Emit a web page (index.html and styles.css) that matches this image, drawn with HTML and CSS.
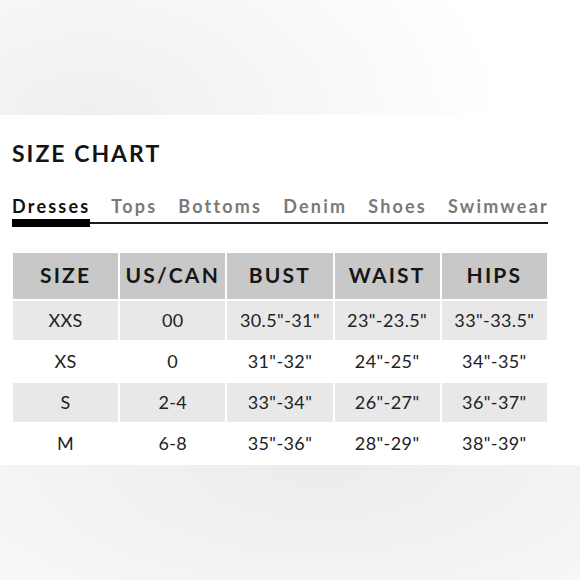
FILE: index.html
```html
<!DOCTYPE html>
<html>
<head>
<meta charset="utf-8">
<link rel="stylesheet" href="styles.css">
</head>
<body>
<div class="band band-top"></div>
<section class="sheet">
  <h1 class="title">SIZE CHART</h1>
  <nav class="tabs">
    <span class="tab active">Dresses</span>
    <span class="tab">Tops</span>
    <span class="tab">Bottoms</span>
    <span class="tab">Denim</span>
    <span class="tab">Shoes</span>
    <span class="tab">Swimwear</span>
  </nav>
  <table class="chart">
    <thead>
      <tr><th>SIZE</th><th>US/CAN</th><th>BUST</th><th>WAIST</th><th>HIPS</th></tr>
    </thead>
    <tbody>
      <tr class="shade"><td>XXS</td><td>00</td><td>30.5"-31"</td><td>23"-23.5"</td><td>33"-33.5"</td></tr>
      <tr><td>XS</td><td>0</td><td>31"-32"</td><td>24"-25"</td><td>34"-35"</td></tr>
      <tr class="shade"><td>S</td><td>2-4</td><td>33"-34"</td><td>26"-27"</td><td>36"-37"</td></tr>
      <tr><td>M</td><td>6-8</td><td>35"-36"</td><td>28"-29"</td><td>38"-39"</td></tr>
    </tbody>
  </table>
</section>
<div class="band band-bottom"></div>
</body>
</html>
```
FILE: styles.css
```css
html, body {
  margin: 0;
  padding: 0;
  background: #ffffff;
}
body {
  width: 580px;
  height: 580px;
  overflow: hidden;
  font-family: Lato, "Liberation Sans", sans-serif;
  color: #1a1a1a;
}
.band {
  height: 115px;
}
.band-top {
  background:
    radial-gradient(ellipse 420px 260px at 15% 100%, #efefef 0%, #f6f6f6 45%, rgba(255,255,255,0) 100%),
    #ffffff;
}
.band-bottom {
  background:
    radial-gradient(ellipse 520px 220px at 55% 0%, #ececec 0%, #f3f3f3 50%, #fbfbfb 100%),
    #fbfbfb;
}
.sheet {
  height: 350px;
  box-sizing: border-box;
  padding: 24px 32px 0 12px;
  background: #ffffff;
}
.title {
  margin: 0;
  font-size: 23px;
  line-height: 28px;
  font-weight: 700;
  letter-spacing: 2px;
  color: #141414;
}
.tabs {
  margin-top: 29px;
  display: flex;
  gap: 21px;
  border-bottom: 2px solid #1a1a1a;
  padding-bottom: 6px;
}
.tab {
  position: relative;
  font-size: 18px;
  line-height: 20px;
  font-weight: 700;
  letter-spacing: 2.2px;
  color: #7a7a7a;
}
.tab.active {
  color: #111111;
}
.tab.active::after {
  content: "";
  position: absolute;
  left: 0;
  right: 0;
  bottom: -11px;
  height: 8px;
  background: #000000;
}
.chart {
  margin: 27px 0 0 -1px;
  width: 538px;
  table-layout: fixed;
  border-collapse: separate;
  border-spacing: 2px;
  text-align: center;
}
.chart th {
  height: 46px;
  box-sizing: border-box;
  padding: 0 0 4px;
  background: #c8c8c8;
  font-size: 21px;
  font-weight: 700;
  letter-spacing: 2.2px;
  color: #161616;
}
.chart td {
  height: 39px;
  box-sizing: border-box;
  padding: 0 0 2px;
  font-size: 18px;
  font-weight: 400;
  letter-spacing: 0.4px;
  color: #222222;
}
.chart .shade td {
  background: #e8e8e8;
}
```
